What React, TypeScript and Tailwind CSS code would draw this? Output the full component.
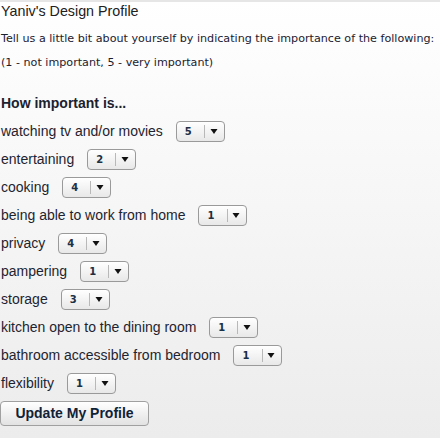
import React from "react";

const rows: [string, string][] = [
  ["watching tv and/or movies", "5"],
  ["entertaining", "2"],
  ["cooking", "4"],
  ["being able to work from home", "1"],
  ["privacy", "4"],
  ["pampering", "1"],
  ["storage", "3"],
  ["kitchen open to the dining room", "1"],
  ["bathroom accessible from bedroom", "1"],
  ["flexibility", "1"],
];

function Sel({ v }: { v: string }) {
  return (
    <div className="ml-[13px] flex h-[21px] w-[49px] items-center rounded-[4px] border border-[#9a9a9a] bg-gradient-to-b from-[#ffffff] to-[#e8e8e8]">
      <span className="w-[29px] pl-[8px] text-[10px] font-bold text-[#1b2f45] [font-family:'DejaVu_Sans',Verdana,sans-serif]">{v}</span>
      <span className="h-[13px] w-px bg-[#b8b8b8]" />
      <svg width="19" height="10" viewBox="0 0 19 10" className="shrink-0">
        <path d="M5.5 3 L12.5 3 L9 8 Z" fill="#111" />
      </svg>
    </div>
  );
}

export default function App() {
  return (
    <div className="min-h-[438px] w-[440px] bg-gradient-to-b from-[#ffffff] to-[#ececec] [font-family:'Liberation_Sans',Arial,sans-serif] text-[#222]">
      <div className="h-[2px] bg-[#e6e6e6]" />
      <div className="pl-[1px]">
        <div className="mt-0 text-[14.3px] leading-[18px] text-[#202020]">Yaniv's Design Profile</div>
        <div className="mt-[12px] text-[11.15px] leading-[13px] text-[#1b2030] [font-family:'DejaVu_Sans',Verdana,sans-serif]">
          Tell us a little bit about yourself by indicating the importance of the following:
        </div>
        <div className="mt-[11px] text-[11.15px] leading-[13px] text-[#1b2030] [font-family:'DejaVu_Sans',Verdana,sans-serif]">
          (1 - not important, 5 - very important)
        </div>
        <div className="mt-[26px] text-[14px] font-bold leading-[16px] text-[#1a2230]">How important is...</div>
        <div className="mt-[6px] flex flex-col">
          {rows.map(([l, v]) => (
            <div key={l} className="flex h-[28px] items-center">
              <span className="text-[14px] text-[#1e2430]">{l}</span>
              <Sel v={v} />
            </div>
          ))}
        </div>
        <button className="mt-[4px] ml-[-1px] h-[25px] w-[149px] rounded-[4px] border border-[#a0a0a0] bg-gradient-to-b from-[#ffffff] to-[#e2e2e2] text-[14px] font-bold text-[#102238] [font-family:'Liberation_Sans',Arial,sans-serif]">
          Update My Profile
        </button>
      </div>
    </div>
  );
}
